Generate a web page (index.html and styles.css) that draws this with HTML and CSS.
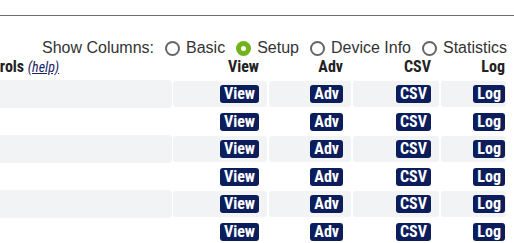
FILE: index.html
```html
<!DOCTYPE html>
<html lang="en">
<head>
    <meta charset="UTF-8">
    <meta name="viewport" content="width=device-width, initial-scale=1.0">
    <title>Device Setup</title>
    <link rel="stylesheet" href="styles.css">
</head>
<body>
    <!-- Top bar with divider -->
    <div class="topbar"></div>

    <!-- Column switcher -->
    <div class="columns">
        <span class="columns-label">Show Columns:</span>
        <label class="choice"><span class="radio"></span>Basic</label>
        <label class="choice"><span class="radio checked"></span>Setup</label>
        <label class="choice"><span class="radio"></span>Device Info</label>
        <label class="choice"><span class="radio"></span>Statistics</label>
    </div>

    <!-- Device table -->
    <table class="devices">
        <colgroup>
            <col class="col-controls">
            <col class="col-view">
            <col class="col-adv">
            <col class="col-csv">
            <col class="col-log">
        </colgroup>
        <thead>
            <tr>
                <th class="controls">Controls <a href="#help" class="help">(help)</a></th>
                <th>View</th>
                <th>Adv</th>
                <th>CSV</th>
                <th class="last">Log</th>
            </tr>
        </thead>
        <tbody>
            <tr class="odd">
                <td class="controls"></td>
                <td><a href="#" class="btn">View</a></td>
                <td><a href="#" class="btn">Adv</a></td>
                <td><a href="#" class="btn">CSV</a></td>
                <td class="last"><a href="#" class="btn">Log</a></td>
            </tr>
            <tr>
                <td class="controls"></td>
                <td><a href="#" class="btn">View</a></td>
                <td><a href="#" class="btn">Adv</a></td>
                <td><a href="#" class="btn">CSV</a></td>
                <td class="last"><a href="#" class="btn">Log</a></td>
            </tr>
            <tr class="odd">
                <td class="controls"></td>
                <td><a href="#" class="btn">View</a></td>
                <td><a href="#" class="btn">Adv</a></td>
                <td><a href="#" class="btn">CSV</a></td>
                <td class="last"><a href="#" class="btn">Log</a></td>
            </tr>
            <tr>
                <td class="controls"></td>
                <td><a href="#" class="btn">View</a></td>
                <td><a href="#" class="btn">Adv</a></td>
                <td><a href="#" class="btn">CSV</a></td>
                <td class="last"><a href="#" class="btn">Log</a></td>
            </tr>
            <tr class="odd">
                <td class="controls"></td>
                <td><a href="#" class="btn">View</a></td>
                <td><a href="#" class="btn">Adv</a></td>
                <td><a href="#" class="btn">CSV</a></td>
                <td class="last"><a href="#" class="btn">Log</a></td>
            </tr>
            <tr>
                <td class="controls"></td>
                <td><a href="#" class="btn">View</a></td>
                <td><a href="#" class="btn">Adv</a></td>
                <td><a href="#" class="btn">CSV</a></td>
                <td class="last"><a href="#" class="btn">Log</a></td>
            </tr>
        </tbody>
    </table>
</body>
</html>
```

FILE: styles.css
```css
/* Basic reset */
* {
    margin: 0;
    padding: 0;
    box-sizing: border-box;
}

html {
    overflow: hidden;
}

body {
    background-color: #fff;
    color: #222;
    font-family: "Liberation Sans", Arial, sans-serif;
}

/* Top divider */
.topbar {
    height: 16px;
    border-bottom: 1px solid #6e6e6e;
}

/* Column switcher */
.columns {
    display: flex;
    justify-content: flex-end;
    align-items: center;
    margin-top: 23px;
    padding-right: 7px;
    font-size: 16px;
    line-height: 18px;
    color: #333;
}

.choice {
    display: flex;
    align-items: center;
    margin-left: 11px;
}

.radio {
    width: 15px;
    height: 15px;
    margin-right: 6px;
    border: 2px solid #666;
    border-radius: 50%;
    position: relative;
}

.radio.checked {
    border: none;
    background-color: #72b31d;
}

.radio.checked::after {
    content: "";
    position: absolute;
    left: 5px;
    top: 5px;
    width: 5px;
    height: 5px;
    border-radius: 50%;
    background-color: #fff;
}

/* Device table */
.devices {
    table-layout: fixed;
    border-collapse: separate;
    border-spacing: 2px;
    width: 546px;
    margin-left: -38px;
    margin-top: -2px;
    font-family: "Liberation Sans Narrow", "Arial Narrow", "Roboto Condensed", sans-serif;
    font-stretch: condensed;
}

.col-controls { width: 207px; }
.col-view { width: 94px; }
.col-adv { width: 82px; }
.col-csv { width: 86px; }
.col-log { width: 65px; }

th {
    text-align: right;
    font-size: 16px;
    line-height: 18px;
    font-weight: bold;
    color: #222;
    padding: 1px 8px 3px 0;
}

th.controls {
    text-align: left;
    padding-left: 6px;
}

.help {
    font-size: 14px;
    font-weight: normal;
    font-style: italic;
    color: #1a2466;
}

td {
    height: 25.5px;
    text-align: right;
    padding: 0 8px 0 0;
    border-radius: 3px;
    vertical-align: middle;
}

th.last,
td.last {
    padding-right: 1px;
}

tr.odd td {
    background-color: #f2f3f5;
}

tr.odd td.controls {
    box-shadow: 0 0 0 1px #f2f3f5;
}

.btn {
    display: inline-block;
    padding: 0 4px;
    line-height: 18px;
    font-size: 16px;
    font-weight: bold;
    color: #fff;
    background-color: #0c1d5c;
    border-radius: 3px;
    text-decoration: none;
}
```
